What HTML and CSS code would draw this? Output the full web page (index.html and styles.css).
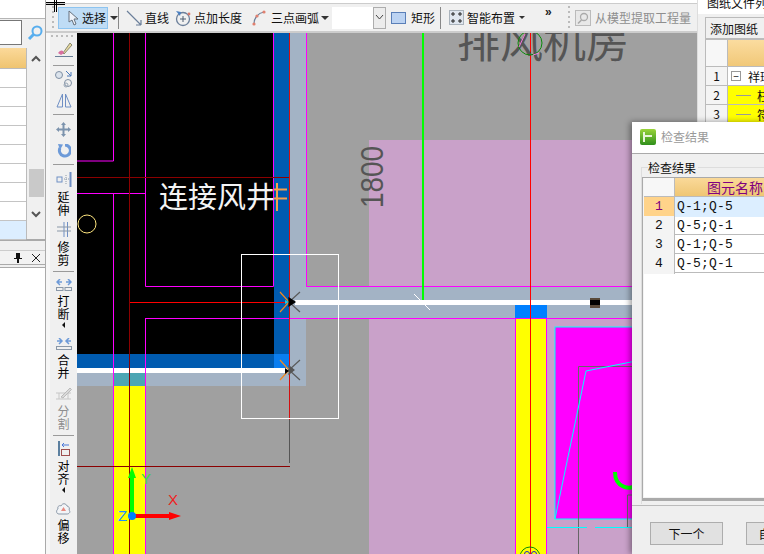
FILE: index.html
```html
<!DOCTYPE html>
<html lang="zh-CN">
<head>
<meta charset="utf-8">
<title>检查结果</title>
<link rel="stylesheet" href="styles.css">
</head>
<body>
<div class="app">
  <aside class="left">
    <div class="left-top"></div>
    <div class="search">
      <div class="search-input"></div>
      <svg class="search-icon" width="16" height="16" viewBox="0 0 16 16"><circle cx="10" cy="6" r="4.5" fill="none" stroke="#58aeee" stroke-width="2"/><path d="M6.5 9.5 2 14" stroke="#58aeee" stroke-width="3"/></svg>
    </div>
    <div class="list">
      <div class="list-rows">
        <div class="list-head"></div>
        <div class="list-row"></div><div class="list-row"></div><div class="list-row"></div><div class="list-row"></div>
        <div class="list-row"></div><div class="list-row"></div><div class="list-row"></div><div class="list-row"></div>
        <div class="list-row is-sel"></div>
      </div>
      <div class="list-scroll">
        <svg width="10" height="7" viewBox="0 0 10 7"><path d="M1 6 5 2l4 4" fill="none" stroke="#555" stroke-width="2"/></svg>
        <div class="thumb"></div>
        <svg width="10" height="7" viewBox="0 0 10 7"><path d="M1 1l4 4 4-4" fill="none" stroke="#555" stroke-width="2"/></svg>
      </div>
    </div>
    <div class="dock-title">
      <svg width="10" height="11" viewBox="0 0 10 11"><path d="M3 1h4v5h2v1H6v4H4V7H1V6h2z" fill="#111"/></svg>
      <svg width="10" height="10" viewBox="0 0 10 10"><path d="M1 1l8 8M9 1 1 9" stroke="#222" stroke-width="1"/></svg>
    </div>
    <div class="dock-body"></div>
  </aside>

  <header class="topbar">
    <div class="grip-v"></div>
    <div class="tool tool-sel">
      <svg width="12" height="16" viewBox="0 0 12 16"><path d="M2 1v11l3-2 2 5 2-1-2-5h4z" fill="#eef3fa" stroke="#67717d"/></svg>
      <span>选择</span>
    </div>
    <div class="tri"></div>
    <div class="sep"></div>
    <div class="tool">
      <svg width="16" height="16" viewBox="0 0 16 16"><path d="M1 1l14 14M15 15V10M15 15h-5" fill="none" stroke="#6b7f9a" stroke-width="1.2"/></svg>
      <span>直线</span>
    </div>
    <div class="tool">
      <svg width="17" height="18" viewBox="0 0 17 18"><circle cx="9" cy="10" r="6.5" fill="none" stroke="#6b7f9a" stroke-width="1.3"/><path d="M9 7v6M6 10h6" stroke="#4c5c70"/><path d="M2 2l5 1-1 4z" fill="#4a7fc0"/><circle cx="15" cy="5" r="1.4" fill="#d97a6c"/></svg>
      <span>点加长度</span>
    </div>
    <div class="tool tool-arc">
      <svg width="14" height="16" viewBox="0 0 14 16"><path d="M2 14C2 8 6 3 12 2" fill="none" stroke="#6b7f9a" stroke-width="1.2"/><circle cx="2" cy="14" r="1.6" fill="#e0806f"/><circle cx="5" cy="6" r="1.6" fill="#e0806f"/><circle cx="12" cy="2" r="1.6" fill="#e0806f"/></svg>
      <span>三点画弧</span>
    </div>
    <div class="tri"></div>
    <div class="combo"><div class="combo-field"></div><div class="combo-btn"><svg width="9" height="5" viewBox="0 0 9 5"><path d="M1 0l3.500 4L8 0" fill="none" stroke="#444"/></svg></div></div>
    <div class="tool tool-rect">
      <svg width="15" height="12" viewBox="0 0 15 12"><rect x=".5" y=".5" width="14" height="11" fill="#bcd3f2" stroke="#5a7fb8"/></svg>
      <span>矩形</span>
    </div>
    <div class="sep"></div>
    <div class="tool">
      <svg width="15" height="15" viewBox="0 0 15 15"><rect x=".5" y=".5" width="14" height="14" fill="#dfe6ef" stroke="#6d7a88" stroke-dasharray="1 1"/><path d="M4 2v4M2 4h4M11 2v4M9 4h4M4 9v4M2 11h4M11 9v4M9 11h4" stroke="#222"/></svg>
      <span>智能布置</span>
    </div>
    <div class="tri tri-small"></div>
    <div class="more">»</div>
    <div class="grip-v"></div>
    <div class="tool tool-off">
      <svg width="16" height="16" viewBox="0 0 16 16"><rect x=".5" y=".5" width="15" height="15" fill="#e8e8e8" stroke="#bbb"/><circle cx="9" cy="7" r="3.500" fill="none" stroke="#aaa" stroke-width="1.3"/><path d="M6.500 10 3 13.500" stroke="#aaa" stroke-width="1.6"/></svg>
      <span>从模型提取工程量</span>
    </div>
  </header>

  <nav class="sidebar">
    <div class="grip-h"></div>
    <div class="vitem"><svg width="18" height="16" viewBox="0 0 18 16"><path d="M8 11 15 1l2 2-8 9z" fill="#e8d9a0" stroke="#8a8a70"/><path d="M3 11c2-3 4-3 5-2l1 2-3 2z" fill="#d96fa0"/><path d="M0 14.500h18" stroke="#6a7f98"/></svg></div>
    <div class="vsep"></div>
    <div class="vitem"><svg width="18" height="18" viewBox="0 0 18 18"><circle cx="4" cy="5" r="3.500" fill="#dbe3ec" stroke="#7f8fa3"/><circle cx="13" cy="13" r="3.500" fill="none" stroke="#7f8fa3"/><circle cx="11" cy="15" r="2" fill="none" stroke="#9aa7b6"/><path d="M11 1l5 5M16 2v4h-4" fill="none" stroke="#4a78b8"/></svg></div>
    <div class="vitem"><svg width="16" height="15" viewBox="0 0 16 15"><path d="M6.500 1v13H1zM9.500 1v13H15z" fill="none" stroke="#6f8fc4"/></svg></div>
    <div class="vsep"></div>
    <div class="vitem"><svg width="15" height="15" viewBox="0 0 15 15"><path d="M7.500 0 10 3H8.500v3.500H12V5l3 2.500L12 10V8.500H8.500V12H10l-2.500 3L5 12h1.500V8.500H3V10L0 7.500 3 5v1.500h3.500V3H5z" fill="#7c93ad"/></svg></div>
    <div class="vitem"><svg width="14" height="14" viewBox="0 0 14 14"><path d="M8 1a5.500 5.500 0 1 1-5 3" fill="none" stroke="#6d9ad8" stroke-width="3"/><path d="M1 0l5 .5L3 6z" fill="#6d9ad8"/></svg></div>
    <div class="vsep"></div>
    <div class="vitem">
      <svg width="16" height="15" viewBox="0 0 16 15"><path d="M14.500 0v15" stroke="#6f8fc4" stroke-width="2"/><rect x="1" y="5" width="5" height="5" fill="none" stroke="#6f8fc4"/><path d="M8 7h5M10 3v9" stroke="#8a98a8" stroke-dasharray="1 1"/></svg>
      <span class="vlabel">延伸</span>
    </div>
    <div class="vitem">
      <svg width="16" height="15" viewBox="0 0 16 15"><path d="M11.500 0v15M8 0v15" stroke="#6f8fc4"/><path d="M1 5h14M1 9h14" stroke="#8a98a8"/></svg>
      <span class="vlabel">修剪</span>
    </div>
    <div class="vsep"></div>
    <div class="vitem">
      <svg width="16" height="12" viewBox="0 0 16 12"><path d="M6 3H1M4 0 1 3l3 3M10 3h5M12 0l3 3-3 3" fill="none" stroke="#6d9ad8" stroke-width="1.500"/><rect x=".5" y="8.500" width="6.500" height="3" fill="none" stroke="#8a98a8"/><rect x="9" y="8.500" width="6.500" height="3" fill="none" stroke="#8a98a8"/></svg>
      <span class="vlabel">打断</span>
      <div class="tri-left"></div>
    </div>
    <div class="vitem">
      <svg width="16" height="12" viewBox="0 0 16 12"><path d="M1 3h5M3 0l3 3-3 3M15 3h-5M13 0l-3 3 3 3" fill="none" stroke="#6d9ad8" stroke-width="1.500"/><rect x=".5" y="8.500" width="15" height="3" fill="none" stroke="#8a98a8"/></svg>
      <span class="vlabel">合并</span>
    </div>
    <div class="vitem is-off">
      <svg width="16" height="14" viewBox="0 0 16 14"><path d="M0 6h15M0 12h15M3 6v6M12 6v6" stroke="#c6c6c6"/><path d="M5 10 14 1l1.500 1.500L7 11z" fill="#d9d9d9" stroke="#bbb"/></svg>
      <span class="vlabel">分割</span>
    </div>
    <div class="vsep"></div>
    <div class="vitem">
      <svg width="12" height="15" viewBox="0 0 12 15"><path d="M1 0v15" stroke="#5b7f9f" stroke-width="2"/><path d="M11 4H4M6 2 4 4l2 2" fill="none" stroke="#4a78d8"/><rect x="3.500" y="8.500" width="8" height="6" fill="none" stroke="#9f4f4f"/></svg>
      <span class="vlabel">对齐</span>
      <div class="tri-left"></div>
    </div>
    <div class="vitem">
      <svg width="15" height="13" viewBox="0 0 15 13"><path d="M3 12C0 12 0 8 2 7 1 4 4 3 5 4c1-3 5-3 6 0 2 0 3 3 2 4 2 2 0 4-2 4z" fill="#f2f4f7" stroke="#8a98a8"/><path d="M5 9h5l-2.500-4z" fill="#e88a80"/></svg>
      <span class="vlabel">偏移</span>
    </div>
  </nav>

  <main class="canvas">
    <svg class="drawing" width="620" height="521" viewBox="77 33 620 521">
      <rect x="369" y="140" width="330" height="147" fill="#c9a1c9"/>
      <rect x="369" y="319" width="330" height="235" fill="#c9a1c9"/>
      <rect x="77" y="33" width="197" height="321" fill="#000"/>
      <rect x="274" y="33" width="16" height="335" fill="#005bb0"/>
      <rect x="77" y="354" width="197" height="14" fill="#005bb0"/>
      <rect x="274" y="354" width="15" height="14" fill="#0a7ef0"/>
      <rect x="290" y="33" width="16" height="337" fill="#a3b3c5"/>
      <rect x="77" y="373" width="229" height="13" fill="#a3b3c5"/>
      <rect x="274" y="368" width="32" height="18" fill="#a3b3c5"/>
      <rect x="290" y="287" width="410" height="32" fill="#a3b3c5"/>
      <rect x="113" y="386" width="32" height="168" fill="#ff0"/>
      <rect x="113" y="373" width="32" height="13" fill="#4da6b4"/>
      <rect x="515" y="319" width="31" height="235" fill="#ff0"/>
      <rect x="515" y="305" width="32" height="14" fill="#0080ff"/>
      <rect x="77" y="368" width="213" height="5" fill="#fff"/>
      <rect x="295" y="300" width="400" height="5" fill="#fff"/>
      <rect x="555" y="327" width="140" height="192" fill="#f0f" stroke="#0ff"/>
      <g fill="none" stroke="#f0f">
        <path d="M113.500 33v128H77M77 193.500h68M113.500 193.500V554M145.500 33v253.500H273.500V33M145.500 319v235M145 318.500h555M306.500 33v253.500H700M515.500 319v235M546.500 319v235"/>
      </g>
      <g fill="none" stroke="#8b0000">
        <path d="M129.500 33v521M77 177.500h213M77 466.500h213"/>
      </g>
      <path d="M130 302.500h160" stroke="#f00"/>
      <path d="M423 33v267" stroke="#0f0" stroke-width="2"/>
      <path d="M530.500 33V554" stroke="#f00"/>
      <path d="M289.500 33V420" stroke="#d40f0f"/>
      <path d="M289.500 420v43" stroke="#555"/>
      <path d="M414 294l8 8m2 2 6 6" stroke="#fff"/>
      <rect x="590" y="298" width="10" height="10" fill="#5a4a3a"/>
      <rect x="590" y="300" width="10" height="5" fill="#000"/>
      <text class="label-dark" x="457" y="58">排风机房</text>
      <g fill="none">
        <circle cx="530" cy="43" r="12" stroke="#0a8a0a"/>
        <path d="M519 47l6-13M533 55l6-2" stroke="#f27ae0"/>
      </g>
      <text class="label-dim" transform="translate(383 208) rotate(-90) scale(.87 1)">1800</text>
      <text class="label-white" x="159" y="208">连接风井</text>
      <path d="M277 183v28M274 189.500h13M274 198.500h13" stroke="#f4a050" stroke-width="2"/>
      <circle cx="87" cy="224" r="9" fill="none" stroke="#ffe67f"/>
      <rect x="241.500" y="254.500" width="97" height="164" fill="none" stroke="#fff"/>
      <g stroke-width="1.200">
        <path d="M280 292l9 10-9 10" fill="none" stroke="#f08a20"/>
        <path d="M300 292l-11 10 11 10" fill="none" stroke="#5a5a5a"/>
        <path d="M289 298l6 4-6 4z" fill="#000" stroke="#000"/>
        <path d="M285 300l4 2-4 2z" fill="#1fc8e0"/>
        <path d="M280 360l9 10-9 10" fill="none" stroke="#f08a20"/>
        <path d="M300 360l-11 10 11 10" fill="none" stroke="#5a5a5a"/>
        <path d="M289 366l5 4-5 4z" fill="#555" stroke="#555"/>
        <path d="M285 368l4 3-4 3z" fill="#000"/>
      </g>
      <path d="M132 515v-38" stroke="#0f0" stroke-width="4"/>
      <path d="M132 467l4 11h-8z" fill="#0f0"/>
      <path d="M135 516h36" stroke="#f00" stroke-width="4"/>
      <path d="M181 516l-12-4v8z" fill="#f00"/>
      <circle cx="132" cy="516" r="4" fill="#0080ff"/>
      <text class="axis axis-z" x="118" y="521">Z</text>
      <text class="axis axis-y" x="141" y="484">Y</text>
      <text class="axis axis-x" x="168" y="505">X</text>
      <g fill="none">
        <path d="M578.500 554V366.500H700" stroke="#666"/>
        <path d="M555 519l31-148 80-16" stroke="#0ff"/>
        <path d="M547 527.500H700" stroke="#0ff" stroke-dasharray="40 8"/>
        <path d="M627.500 527v-32H700" stroke="#666"/>
        <path d="M615 472c0 16 15 19 24 12" stroke="#0f0" stroke-width="4"/>
        <circle cx="530" cy="557" r="10" stroke="#0a8a0a"/>
        <circle cx="527" cy="554" r="2.500" stroke="#2222cc"/>
        <circle cx="534" cy="554" r="2.500" stroke="#2222cc"/>
      </g>
    </svg>
  </main>

  <aside class="right">
    <div class="right-title">图纸文件列表</div>
    <div class="right-actions"><div class="add-btn">添加图纸</div></div>
    <div class="sheet">
      <div class="sheet-num sheet-corner"></div><div class="sheet-head"></div>
      <div class="sheet-num">1</div>
      <div class="sheet-cell"><span class="tree-box">−</span><span>祥瑞</span></div>
      <div class="sheet-num">2</div>
      <div class="sheet-cell is-yellow"><span class="tree-line"></span><span>柱</span></div>
      <div class="sheet-num">3</div>
      <div class="sheet-cell is-yellow"><span class="tree-line"></span><span>符</span></div>
    </div>
  </aside>

  <section class="dialog">
    <div class="dialog-title">
      <svg width="16" height="16" viewBox="0 0 16 16"><defs><linearGradient id="logo" x1="0" y1="0" x2="0" y2="1"><stop offset="0" stop-color="#9ad43a"/><stop offset="1" stop-color="#2f8f1c"/></linearGradient></defs><rect width="16" height="16" rx="2" fill="url(#logo)"/><path d="M4 3v10M4 7h8" stroke="#e8f4d8" stroke-width="2"/></svg>
      <span>检查结果</span>
    </div>
    <div class="dialog-body">
      <div class="group">
        <div class="group-legend">检查结果</div>
        <div class="result">
          <div class="result-row result-head"><div class="result-num"></div><div class="result-name">图元名称</div></div>
          <div class="result-row is-sel"><div class="result-num">1</div><div class="result-val">Q-1;Q-5</div></div>
          <div class="result-row"><div class="result-num">2</div><div class="result-val">Q-5;Q-1</div></div>
          <div class="result-row"><div class="result-num">3</div><div class="result-val">Q-1;Q-5</div></div>
          <div class="result-row"><div class="result-num">4</div><div class="result-val">Q-5;Q-1</div></div>
        </div>
      </div>
    </div>
    <div class="dialog-foot">
      <div class="btn">下一个</div>
      <div class="btn">自动修复</div>
    </div>
  </section>

  <svg class="cursor" width="20" height="13" viewBox="0 0 20 13"><path d="M8.500 0v12M10.500 0v12M0 2.500h19M0 4.500h19" stroke="#000"/></svg>
</div>
</body>
</html>
```

FILE: styles.css
```css
* { box-sizing: border-box; }
html, body { margin: 0; padding: 0; background: #fff; }
body { font-family: "Noto Sans CJK SC", "Liberation Sans", sans-serif; font-size: 12px; color: #111; }

.app {
  position: relative;
  width: 764px;
  height: 554px;
  overflow: hidden;
  display: grid;
  grid-template-columns: 46px 31px 620px 67px;
  grid-template-rows: 33px 521px;
}

/* left dock */
.left { grid-row: 1 / 3; grid-column: 1; display: flex; flex-direction: column; background: #f0f0f0; border-right: 1px solid #aaa; }
.left-top { height: 19px; background: #fff; border-bottom: 1px solid #b5b5b5; }
.search { height: 29px; display: flex; align-items: center; gap: 5px; padding-bottom: 2px; }
.search-input { width: 22px; height: 25px; background: #fff; border: 1px solid #777; border-left: 0; }
.search-icon { display: block; }
.list { height: 193px; display: flex; border-bottom: 2px solid #aaa; }
.list-rows { width: 27px; border-right: 1px solid #bbb; background: #fff; }
.list-head { height: 21px; background: linear-gradient(#fbd99a, #efc470); border-bottom: 1px solid #bbb; }
.list-row { height: 19px; border-bottom: 1px solid #c4c4c4; background: #fff; }
.list-row.is-sel { background: #dceeff; }
.list-scroll { flex: 1; display: flex; flex-direction: column; align-items: center; padding-top: 7px; }
.thumb { width: 15px; height: 28px; background: #c9c9c9; margin-top: 107px; margin-bottom: 14px; }
.dock-title { height: 15px; margin-top: 9px; display: flex; justify-content: flex-end; align-items: center; gap: 8px; padding-right: 4px; background: #f2f2f2; border-bottom: 1px solid #aaa; border-top: 1px solid #ccc; }
.dock-body { flex: 1; background: #fff; border-top: 1px solid #aaa; margin-top: 2px; }

/* top toolbar */
.topbar {
  grid-row: 1;
  grid-column: 2 / 4;
  margin-top: 3px;
  display: grid;
  grid-template-columns: 12px 51px 9px 8px 48px 76px 70px 12px 54px 54px 9px 68px 28px 17px 13px 122px;
  align-items: center;
  background: #f0f0f0;
  border-top: 1px solid #ccc;
  border-bottom: 2px solid #ccc;
}
.grip-v { width: 2px; height: 24px; margin-left: 6px; background: repeating-linear-gradient(#bbb 0 2px, transparent 2px 5px); }
.tool { display: flex; align-items: center; gap: 3px; white-space: nowrap; height: 22px; }
.tool svg { flex: none; }
.tool-sel { gap: 3px; padding-left: 8px; background: #bfdcf5; border: 1px solid #8dc4f0; width: 50px; overflow: hidden; }
.tool-arc { gap: 5px; padding-left: 2px; }
.tool-rect { gap: 5px; padding-left: 5px; }
.tool-off { color: #8e8e8e; gap: 4px; }
.tri { width: 0; height: 0; border-left: 4px solid transparent; border-right: 4px solid transparent; border-top: 4px solid #333; margin-left: 1px; }
.tri-small { border-width: 3px 3px 0; margin-left: 2px; }
.sep { width: 1px; height: 22px; background: #888; }
.more { font-size: 12px; font-weight: 700; line-height: 1; margin-top: -12px; font-family: "Liberation Sans", sans-serif; color: #222; }
.combo { display: flex; width: 54px; height: 22px; }
.combo-field { width: 41px; background: #fff; }
.combo-btn { flex: 1; display: flex; align-items: center; justify-content: center; border: 1px solid #adadad; background: #ececec; }

/* vertical toolbar */
.sidebar {
  grid-row: 2;
  grid-column: 2;
  width: 31px;
  display: grid;
  grid-template-rows: 5px 24px 6px 22px 21px 7px 23px 20px 8px 50px 49px 6px 58px 52px 48px 6px 57px 55px 4px;
  background: #f0f0f0;
  border-left: 4px solid #f7f7f7;
}
.grip-h { height: 2px; margin: 2px 1px 0; background: repeating-linear-gradient(90deg, #bbb 0 2px, transparent 2px 5px); }
.vitem { display: flex; flex-direction: column; align-items: center; justify-content: center; gap: 3px; }
.vitem svg { display: block; }
.vsep { height: 1px; margin: 3px 3px 0 3px; background: #9a9a9a; }
.vlabel { width: 13px; font-size: 12px; line-height: 13px; text-align: center; word-break: break-all; color: #000; }
.is-off .vlabel { color: #8e8e8e; }
.tri-left { width: 0; height: 0; margin-top: -1px; border-top: 3px solid transparent; border-bottom: 3px solid transparent; border-right: 3px solid #111; }

/* drawing */
.canvas { grid-row: 2; grid-column: 3; background: #a0a0a0; overflow: hidden; }
.drawing { display: block; }
.label-dark { font-size: 43px; fill: #555; font-family: "Noto Sans CJK SC", sans-serif; }
.label-dim { font-family: "Liberation Sans", sans-serif; font-size: 32px; fill: #555; }
.label-white { font-size: 29px; fill: #f4f4f4; font-family: "Noto Sans CJK SC", sans-serif; }
.axis { font-family: "Liberation Sans", sans-serif; font-size: 15px; }
.axis-z { fill: #1e90ff; }
.axis-y { fill: #3fdc3f; }
.axis-x { fill: #f02020; }

/* right dock */
.right { grid-row: 1 / 3; grid-column: 4; background: #f0f0f0; padding-left: 7px; overflow: hidden; white-space: nowrap; border-left: 1px solid #ddd; }
.right-title { height: 20px; margin: -6px 0 0 -8px; padding-left: 10px; line-height: 17px; background: #fff; }
.right-actions { height: 25px; padding-top: 3px; }
.add-btn { width: 70px; height: 22px; line-height: 21px; padding-left: 4px; border: 1px solid #bbb; background: #f0f0f0; }
.sheet { display: grid; grid-template-columns: 22px 60px; grid-template-rows: 27px 19px 19px 19px; border: 1px solid #bbb; border-right: 0; background: #fff; }
.sheet-num { text-align: center; line-height: 18px; background: #f4f4f4; border-right: 1px solid #bbb; border-bottom: 1px solid #bbb; }
.sheet-corner { background: #f7f7f7; }
.sheet-head { background: linear-gradient(#fbdc9f, #f1c878); border-bottom: 1px solid #bbb; }
.sheet-cell { display: flex; align-items: center; gap: 7px; border-bottom: 1px solid #bbb; padding-left: 3px; height: 19px; background: #fff; }
.sheet-cell.is-yellow { background: #ff0; padding-left: 8px; gap: 6px; }
.tree-box { width: 10px; height: 10px; border: 1px solid #999; background: #fff; line-height: 8px; font-size: 10px; text-align: center; }
.tree-line { width: 15px; height: 1px; background: #999; }

/* dialog window */
.dialog {
  position: absolute;
  left: 632px;
  top: 122px;
  width: 300px;
  height: 432px;
  background: #f0f0f0;
  box-shadow: -2px 0 6px rgba(0, 0, 0, .4);
  display: flex;
  flex-direction: column;
}
.dialog-title { height: 32px; flex: none; display: flex; align-items: center; gap: 5px; padding-left: 8px; background: #fff; color: #9a9a9a; border-bottom: 1px solid #aaa; padding-bottom: 2px; }
.dialog-body { height: 352px; flex: none; background: #f0f0f0; border-bottom: 1px solid #bbb; }
.group { margin: 13px 0 0 9px; border-top: 1px solid #ddd; border-left: 1px solid #ddd; height: 337px; }
.group-legend { margin: -7px 0 0 6px; width: 50px; height: 13px; line-height: 13px; background: #f0f0f0; }
.result { margin-top: 3px; height: 324px; background: #fff; border: 1px solid #aaa; border-bottom: 3px solid #aaa; padding-left: 1px; box-shadow: inset 0 0 0 1px #f4f4f4; }
.result-row { display: grid; grid-template-columns: 31px 1fr; height: 19px; border-bottom: 1px solid #bbb; }
.result-num { text-align: center; line-height: 20px; font-size: 13px; background: #f4f4f4; border-right: 1px solid #bbb; font-family: "Liberation Mono", monospace; }
.result-head .result-num { background: #f7f7f7; }
.result-name { padding-left: 32px; font-size: 14px; line-height: 18px; color: #800080; background: linear-gradient(#fad999, #efc674); white-space: nowrap; }
.result-val { padding-left: 2px; font-family: "Liberation Mono", monospace; font-size: 13px; line-height: 20px; letter-spacing: .2px; }
.is-sel .result-num { background: #ffd38a; color: #800080; }
.is-sel .result-val { background: #dceeff; }
.dialog-foot { flex: 1; display: flex; gap: 23px; padding: 16px 0 0 18px; background: #efefef; }
.btn { width: 73px; height: 23px; line-height: 21px; text-align: center; background: #e1e1e1; border: 1px solid #adadad; flex: none; }

.cursor { position: absolute; left: 46px; top: 0; }
```
